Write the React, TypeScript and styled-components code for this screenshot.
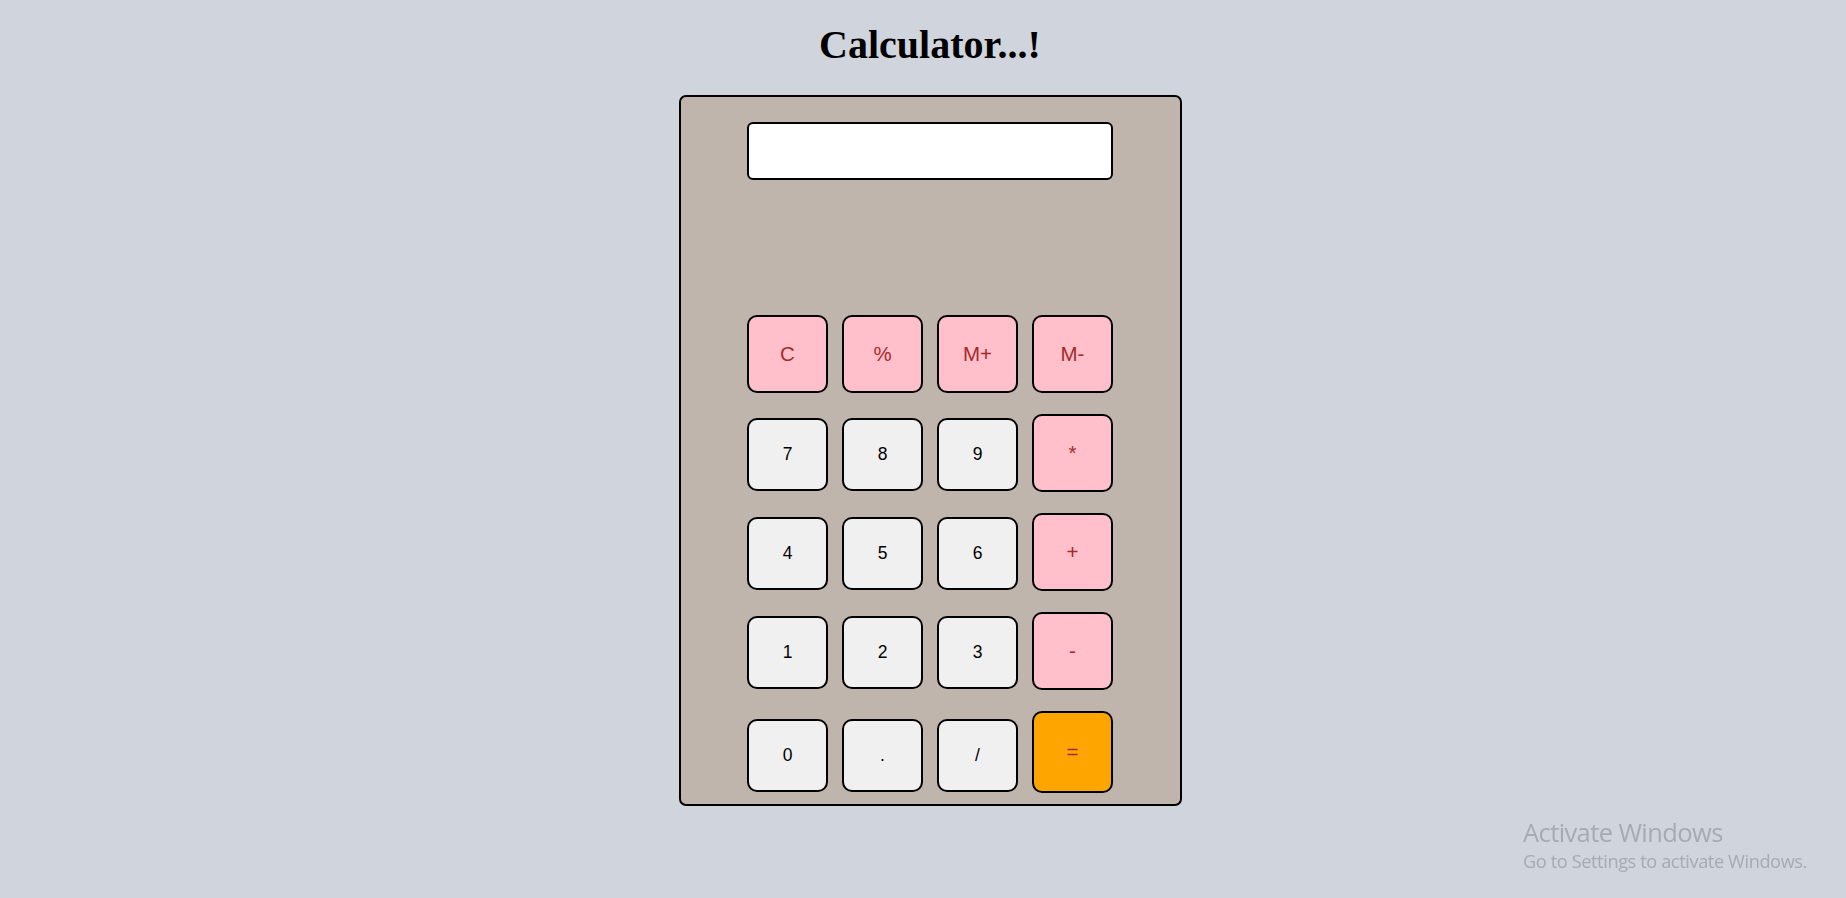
import React from "react";
import styled, { createGlobalStyle, css } from "styled-components";

const GlobalStyle = createGlobalStyle`
  html, body {
    margin: 0;
    padding: 0;
    background: #d0d5dd;
  }
  body {
    font-family: "Liberation Serif", "Times New Roman", serif;
  }
`;

const Page = styled.div`
  box-sizing: border-box;
  display: flex;
  flex-direction: column;
  align-items: center;
  min-height: 898px;
  padding-left: 14px;
`;

const Title = styled.h1`
  margin: 21px 0 27px;
  font-family: "Liberation Serif", "Times New Roman", serif;
  font-size: 40px;
  font-weight: bold;
  line-height: normal;
  color: #000;
`;

const Calculator = styled.div`
  box-sizing: border-box;
  width: 503px;
  padding: 25px 0 11px;
  background: #c0b5ad;
  border: 2px solid #000;
  border-radius: 7px;
  display: flex;
  flex-direction: column;
  align-items: center;
`;

const Display = styled.input`
  box-sizing: border-box;
  width: 366px;
  height: 58px;
  margin: 0 0 135px;
  background: #fff;
  border: 2px solid #000;
  border-radius: 6px;
  outline: none;
  font-family: "Liberation Sans", Arial, sans-serif;
  font-size: 22px;
  padding: 0 10px;
`;

const Keypad = styled.div`
  display: flex;
  flex-direction: column;
  gap: 21px;
  width: 366px;
`;

const Row = styled.div`
  display: flex;
  gap: 14px;
  align-items: flex-end;
`;

type Kind = "digit" | "op" | "equals";

const Key = styled.button<{ $kind: Kind }>`
  box-sizing: border-box;
  width: 81px;
  padding: 0;
  border: 2px solid #000;
  border-radius: 10px;
  font-family: "Liberation Sans", Arial, sans-serif;
  display: flex;
  align-items: center;
  justify-content: center;
  cursor: pointer;
  ${({ $kind }) =>
    $kind === "digit"
      ? css`
          height: 73px;
          margin-bottom: 1px;
          background: #f0f0f0;
          color: #000;
          font-size: 17.5px;
        `
      : $kind === "op"
      ? css`
          height: 78px;
          background: #ffc0cb;
          color: #a52a2a;
          font-size: 20.5px;
        `
      : css`
          height: 82px;
          background: #ffa500;
          color: #a52a2a;
          font-size: 20.5px;
        `}
`;

const Watermark = styled.div`
  position: fixed;
  left: 1523px;
  top: 816px;
  color: #a6aab1;
  font-family: "Open Sans", "Noto Sans", sans-serif;
  pointer-events: none;
`;

const WatermarkTitle = styled.div`
  font-size: 25.5px;
  line-height: 32px;
  letter-spacing: -0.6px;
`;

const WatermarkSub = styled.div`
  font-size: 18.2px;
  line-height: 26px;
  letter-spacing: -0.4px;
`;

const rows: { label: string; kind: Kind }[][] = [
  [
    { label: "C", kind: "op" },
    { label: "%", kind: "op" },
    { label: "M+", kind: "op" },
    { label: "M-", kind: "op" },
  ],
  [
    { label: "7", kind: "digit" },
    { label: "8", kind: "digit" },
    { label: "9", kind: "digit" },
    { label: "*", kind: "op" },
  ],
  [
    { label: "4", kind: "digit" },
    { label: "5", kind: "digit" },
    { label: "6", kind: "digit" },
    { label: "+", kind: "op" },
  ],
  [
    { label: "1", kind: "digit" },
    { label: "2", kind: "digit" },
    { label: "3", kind: "digit" },
    { label: "-", kind: "op" },
  ],
  [
    { label: "0", kind: "digit" },
    { label: ".", kind: "digit" },
    { label: "/", kind: "digit" },
    { label: "=", kind: "equals" },
  ],
];

export default function App() {
  return (
    <>
      <GlobalStyle />
      <Page>
        <Title>Calculator...!</Title>
        <Calculator>
          <Display type="text" readOnly />
          <Keypad>
            {rows.map((row, i) => (
              <Row key={i}>
                {row.map((k) => (
                  <Key key={k.label} $kind={k.kind}>
                    {k.label}
                  </Key>
                ))}
              </Row>
            ))}
          </Keypad>
        </Calculator>
      </Page>
      <Watermark>
        <WatermarkTitle>Activate Windows</WatermarkTitle>
        <WatermarkSub>Go to Settings to activate Windows.</WatermarkSub>
      </Watermark>
    </>
  );
}
